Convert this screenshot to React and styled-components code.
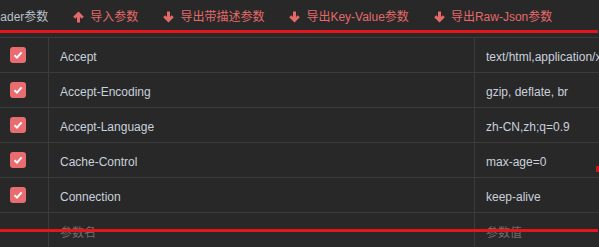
import React from "react";
import styled, { createGlobalStyle } from "styled-components";

const GlobalStyle = createGlobalStyle`
  html, body {
    margin: 0;
    padding: 0;
    background: #282828;
    overflow: hidden;
  }
  body {
    font-family: "Liberation Sans", Arial, "Noto Sans CJK SC", sans-serif;
    font-size: 12px;
  }
`;

const Page = styled.div`
  position: relative;
  width: 599px;
  height: 247px;
  overflow: hidden;
  background: #282828;
`;

const Toolbar = styled.div`
  height: 37px;
  display: flex;
  align-items: flex-start;
  padding-top: 10px;
  box-sizing: border-box;
  white-space: nowrap;
`;

const Title = styled.span`
  color: #b9c0c9;
  margin-left: -15px;
  margin-right: 25px;
  line-height: 14px;
`;

const ActionLink = styled.span`
  display: inline-flex;
  align-items: center;
  color: #e46a6a;
  line-height: 14px;
  margin-right: 25px;
  svg {
    margin-right: 6px;
  }
`;

const Table = styled.div`
  border-top: 1px solid #3b3b3b;
  width: 700px;
`;

const Row = styled.div`
  display: grid;
  grid-template-columns: 49px 426px 1fr;
  height: 35px;
  border-bottom: 1px solid #3b3b3b;
  box-sizing: border-box;
`;

const Cell = styled.div`
  display: flex;
  align-items: center;
  padding: 3px 0 0 ${props => props.pad || 0}px;
  border-right: 1px solid #3b3b3b;
  color: ${props => (props.placeholder ? "#6f6f6f" : "#c9d1dd")};
  white-space: nowrap;
  overflow: hidden;
`;

const Check = styled.span`
  width: 16px;
  height: 16px;
  border-radius: 3px;
  background: #e96d70;
  display: flex;
  align-items: center;
  justify-content: center;
  margin-top: -3px;
`;

const RedLine = styled.div`
  position: absolute;
  left: 0;
  right: 1px;
  top: ${props => props.top}px;
  height: 3px;
  background: #e5161b;
`;

const RedTick = styled.div`
  position: absolute;
  right: 0;
  top: 166px;
  width: 3px;
  height: 6px;
  background: #c8191c;
`;

const Arrow = ({ up }) => (
  <svg width="11" height="12" viewBox="0 0 11 12">
    <g transform={up ? "" : "rotate(180 5.5 6)"}>
      <path d="M5.5 0.5 L10.8 5.8 L8.7 7.8 L7 6.1 L7 11.5 L4 11.5 L4 6.1 L2.3 7.8 L0.2 5.8 Z" fill="#e46a6a" />
    </g>
  </svg>
);

const Tick = () => (
  <svg width="10" height="10" viewBox="0 0 10 10">
    <path d="M1.5 5.2 L4 7.6 L8.6 2.4" stroke="#fff" strokeWidth="2" fill="none" />
  </svg>
);

const rows = [
  ["Accept", "text/html,application/xhtml+xml"],
  ["Accept-Encoding", "gzip, deflate, br"],
  ["Accept-Language", "zh-CN,zh;q=0.9"],
  ["Cache-Control", "max-age=0"],
  ["Connection", "keep-alive"],
];

export default function App() {
  return (
    <Page>
      <GlobalStyle />
      <Toolbar>
        <Title>Header参数</Title>
        <ActionLink>
          <Arrow up />
          导入参数
        </ActionLink>
        <ActionLink>
          <Arrow />
          导出带描述参数
        </ActionLink>
        <ActionLink>
          <Arrow />
          导出Key-Value参数
        </ActionLink>
        <ActionLink>
          <Arrow />
          导出Raw-Json参数
        </ActionLink>
      </Toolbar>
      <Table>
        {rows.map(([k, v]) => (
          <Row key={k}>
            <Cell pad={10}>
              <Check>
                <Tick />
              </Check>
            </Cell>
            <Cell pad={11}>{k}</Cell>
            <Cell pad={11}>{v}</Cell>
          </Row>
        ))}
        <Row>
          <Cell />
          <Cell pad={11} placeholder>参数名</Cell>
          <Cell pad={11} placeholder>参数值</Cell>
        </Row>
      </Table>
      <RedLine top={30} />
      <RedLine top={229} />
      <RedTick />
    </Page>
  );
}
